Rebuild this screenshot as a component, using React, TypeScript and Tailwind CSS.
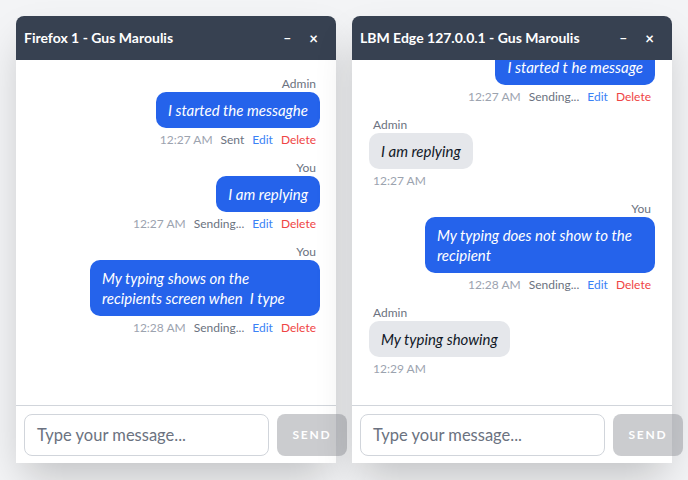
import React from "react";

type Msg = {
  mine: boolean;
  author: string;
  text: string;
  time: string;
  status?: string;
};

const w1: Msg[] = [
  { mine: true, author: "Admin", text: "I started the messaghe", time: "12:27 AM", status: "Sent" },
  { mine: true, author: "You", text: "I am replying", time: "12:27 AM", status: "Sending..." },
  { mine: true, author: "You", text: "My typing shows on the recipients screen when\u00a0 I type", time: "12:28 AM", status: "Sending..." },
];

const w2: Msg[] = [
  { mine: true, author: "You", text: "I started t he message", time: "12:27 AM", status: "Sending..." },
  { mine: false, author: "Admin", text: "I am replying", time: "12:27 AM" },
  { mine: true, author: "You", text: "My typing does not show to the recipient", time: "12:28 AM", status: "Sending..." },
  { mine: false, author: "Admin", text: "My typing showing", time: "12:29 AM" },
];

function Message({ m }: { m: Msg }) {
  return (
    <div className={m.mine ? "flex flex-col items-end" : "flex flex-col items-start"}>
      <div className={m.mine ? "mr-1 text-xs leading-4 text-[#6b7280]" : "ml-1 text-xs leading-4 text-[#6b7280]"}>{m.author}</div>
      <div
        className={
          m.mine
            ? "max-w-[230px] rounded-[10px] bg-[#2563eb] px-3 py-2 text-[15px] leading-5 italic text-white"
            : "max-w-[230px] rounded-[10px] bg-[#e5e7eb] px-3 py-2 text-[15px] leading-5 italic text-[#111827]"
        }
      >
        {m.text}
      </div>
      <div className={m.mine ? "mr-1 mt-1 flex gap-2 text-xs leading-4" : "ml-1 mt-1 flex gap-2 text-xs leading-4"}>
        <span className="text-[#9ca3af]">{m.time}</span>
        {m.status && <span className="text-[#6b7280]">{m.status}</span>}
        {m.mine && <span className="text-[#3b82f6]">Edit</span>}
        {m.mine && <span className="text-[#ef4444]">Delete</span>}
      </div>
    </div>
  );
}

function ChatWindow({ title, msgs, bottom }: { title: string; msgs: Msg[]; bottom?: boolean }) {
  return (
    <div className="flex h-[447px] w-80 shrink-0 flex-col rounded-t-lg bg-white shadow-[0_20px_40px_-8px_rgba(0,0,0,0.22)]">
      <div className="flex h-11 shrink-0 items-center justify-between rounded-t-lg bg-[#374151] pl-2 pr-[18px] text-white">
        <span className="text-sm font-bold">{title}</span>
        <div className="flex items-center gap-[18px] text-sm font-bold leading-none">
          <span>–</span>
          <span className="text-[15px]">×</span>
        </div>
      </div>
      <div
        className={
          bottom
            ? "flex h-[345px] flex-col justify-end gap-3 overflow-hidden px-[17px] pb-7 pt-4"
            : "flex h-[345px] flex-col justify-start gap-3 overflow-hidden px-4 pb-4 pt-4"
        }
      >
        {msgs.map((m, i) => (
          <Message key={i} m={m} />
        ))}
      </div>
      <div className="flex shrink-0 gap-2 border-t border-[#d1d5db] px-2 pb-[7px] pt-2">
        <div className="flex h-[42px] w-[245px] shrink-0 items-center rounded-lg border border-[#d1d5db] bg-white px-3 text-[16.5px] text-[#6b7280]">
          Type your message...
        </div>
        <div className="flex h-[42px] w-[70px] shrink-0 items-center justify-center rounded-lg bg-[rgba(140,142,148,0.45)] text-xs font-bold tracking-[0.15em] text-white">
          SEND
        </div>
      </div>
    </div>
  );
}

export default function App() {
  return (
    <div
      className="flex h-[480px] w-[688px] items-start gap-4 overflow-hidden bg-[#f3f4f6] p-4"
      style={{ fontFamily: "Lato, 'Noto Sans', sans-serif" }}
    >
      <ChatWindow title="Firefox 1 - Gus Maroulis" msgs={w1} />
      <ChatWindow title="LBM Edge 127.0.0.1 - Gus Maroulis" msgs={w2} bottom />
    </div>
  );
}
